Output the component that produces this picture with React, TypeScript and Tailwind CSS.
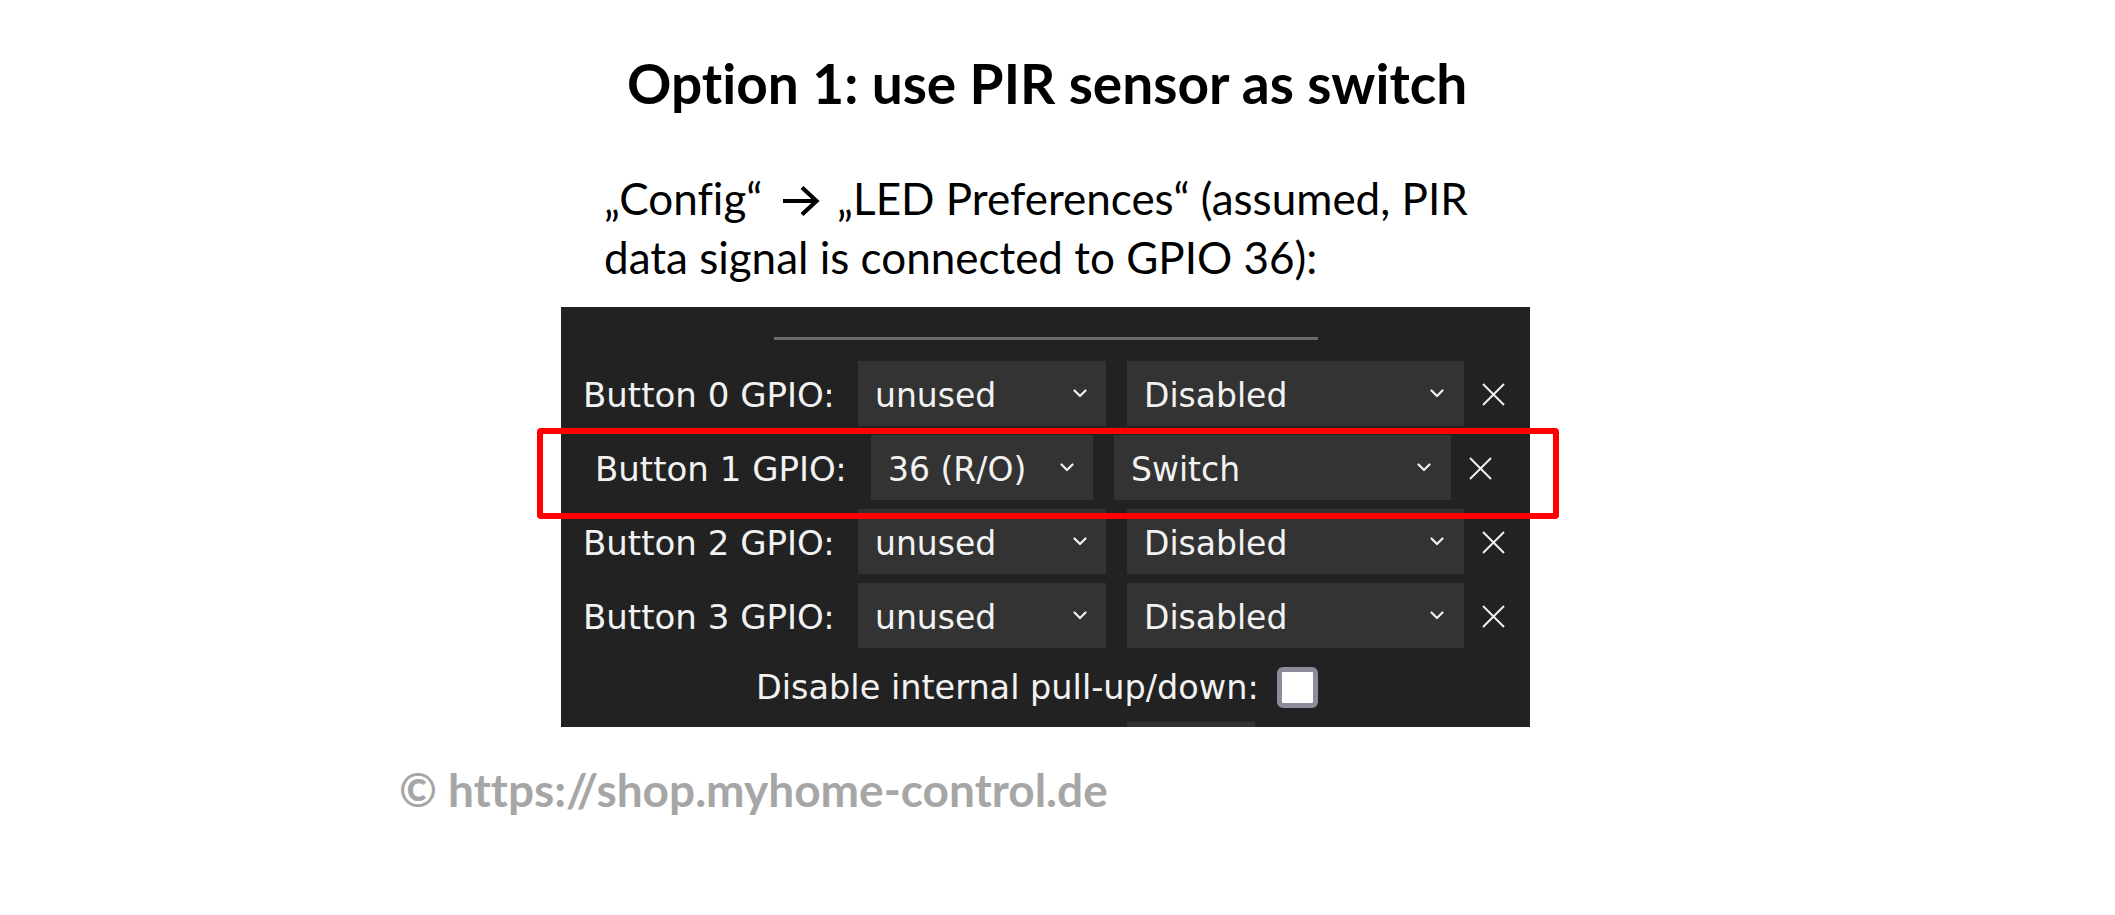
import React from "react";

const Chevron = () => (
  <svg width="14" height="9" viewBox="0 0 14 9" className="shrink-0">
    <polyline points="1.5,1.5 7,7 12.5,1.5" fill="none" stroke="#f2f2f2" strokeWidth="2.2" strokeLinecap="round" strokeLinejoin="round" />
  </svg>
);

const XIcon = () => (
  <svg width="23" height="23" viewBox="0 0 23 23" className="shrink-0">
    <line x1="1" y1="1" x2="22" y2="22" stroke="#f2f2f2" strokeWidth="2" />
    <line x1="22" y1="1" x2="1" y2="22" stroke="#f2f2f2" strokeWidth="2" />
  </svg>
);

type RowProps = {
  label: string;
  gpio: string;
  mode: string;
  pl: string;
  labelW: string;
  sel1W: string;
};

const Row = ({ label, gpio, mode, pl, labelW, sel1W }: RowProps) => (
  <div className={`flex items-center h-[65px] shrink-0 ${pl}`}>
    <div className={`${labelW} shrink-0 whitespace-nowrap text-[34px] pt-[4px]`}>{label}</div>
    <div className={`${sel1W} h-[65px] shrink-0 bg-[#333333] flex items-center justify-between pl-[17px] pr-[19px]`}>
      <span className="whitespace-nowrap pt-[4px]">{gpio}</span>
      <Chevron />
    </div>
    <div className="ml-[21px] w-[337px] h-[65px] shrink-0 bg-[#333333] flex items-center justify-between pl-[17px] pr-[20px]">
      <span className="whitespace-nowrap pt-[4px]">{mode}</span>
      <Chevron />
    </div>
    <div className="ml-[18px] flex items-center shrink-0 pt-[2px]">
      <XIcon />
    </div>
  </div>
);

export default function App() {
  return (
    <div className="relative w-[2115px] h-[915px] bg-white overflow-hidden flex flex-col items-start [font-variant-ligatures:none]">
      <div className="shrink-0 mt-[48px] ml-[627px] whitespace-nowrap text-[55px] leading-[70px] font-bold text-black [font-family:Lato,'Open_Sans',sans-serif]">
        Option 1: use PIR sensor as switch
      </div>

      <div className="shrink-0 mt-[51px] ml-[604px] text-[44px] leading-[59px] text-black [font-family:Lato,'Open_Sans',sans-serif]">
        <div className="whitespace-nowrap flex items-center">
          <span>„Config“&nbsp;</span>
          <svg width="38" height="32" viewBox="0 0 38 32" className="ml-[8px] mr-[6px] mt-[4px] shrink-0">
            <line x1="1" y1="16" x2="34" y2="16" stroke="#000" strokeWidth="4.2" />
            <polyline points="20,2.5 34.5,16 20,29.5" fill="none" stroke="#000" strokeWidth="4.2" />
          </svg>
          <span>&nbsp;„LED Preferences“ (assumed, PIR</span>
        </div>
        <div className="whitespace-nowrap">data signal is connected to GPIO 36):</div>
      </div>

      <div className="shrink-0 mt-[20px] ml-[561px] w-[969px] h-[420px] bg-[#222222] overflow-hidden flex flex-col text-[33px] text-[#f2f2f2] [font-family:'DejaVu_Sans',Verdana,sans-serif]">
        <div className="shrink-0 mt-[30px] mx-auto w-[544px] h-[3px] bg-[#6a6a6a]" />
        <div className="shrink-0 mt-[21px] flex flex-col gap-[9px]">
          <Row label="Button 0 GPIO:" gpio="unused" mode="Disabled" pl="pl-[22px]" labelW="w-[275px]" sel1W="w-[248px]" />
          <Row label="Button 1 GPIO:" gpio="36 (R/O)" mode="Switch" pl="pl-[34px]" labelW="w-[276px]" sel1W="w-[222px]" />
          <Row label="Button 2 GPIO:" gpio="unused" mode="Disabled" pl="pl-[22px]" labelW="w-[275px]" sel1W="w-[248px]" />
          <Row label="Button 3 GPIO:" gpio="unused" mode="Disabled" pl="pl-[22px]" labelW="w-[275px]" sel1W="w-[248px]" />
        </div>
        <div className="shrink-0 mt-[19px] h-[41px] flex items-center pl-[195px]">
          <span className="whitespace-nowrap text-[33.5px] pt-[2px]">Disable internal pull-up/down:</span>
          <div className="ml-[18px] w-[41px] h-[41px] shrink-0 rounded-[6px] border-[5px] border-[#8e8b9d] bg-white" />
        </div>
        <div className="shrink-0 mt-[14px] ml-[566px] w-[128px] h-[20px] bg-[#333333]" />
      </div>

      <div className="shrink-0 mt-[35px] ml-[399px] whitespace-nowrap text-[46px] leading-[56px] font-bold text-[#a6a6a6] [font-family:Lato,'Open_Sans',sans-serif]">
        © https://shop.myhome-control.de
      </div>

      <div className="absolute left-[537px] top-[428px] w-[1022px] h-[91px] border-[6px] border-[#ff0000] rounded-[4px] pointer-events-none" />
    </div>
  );
}
